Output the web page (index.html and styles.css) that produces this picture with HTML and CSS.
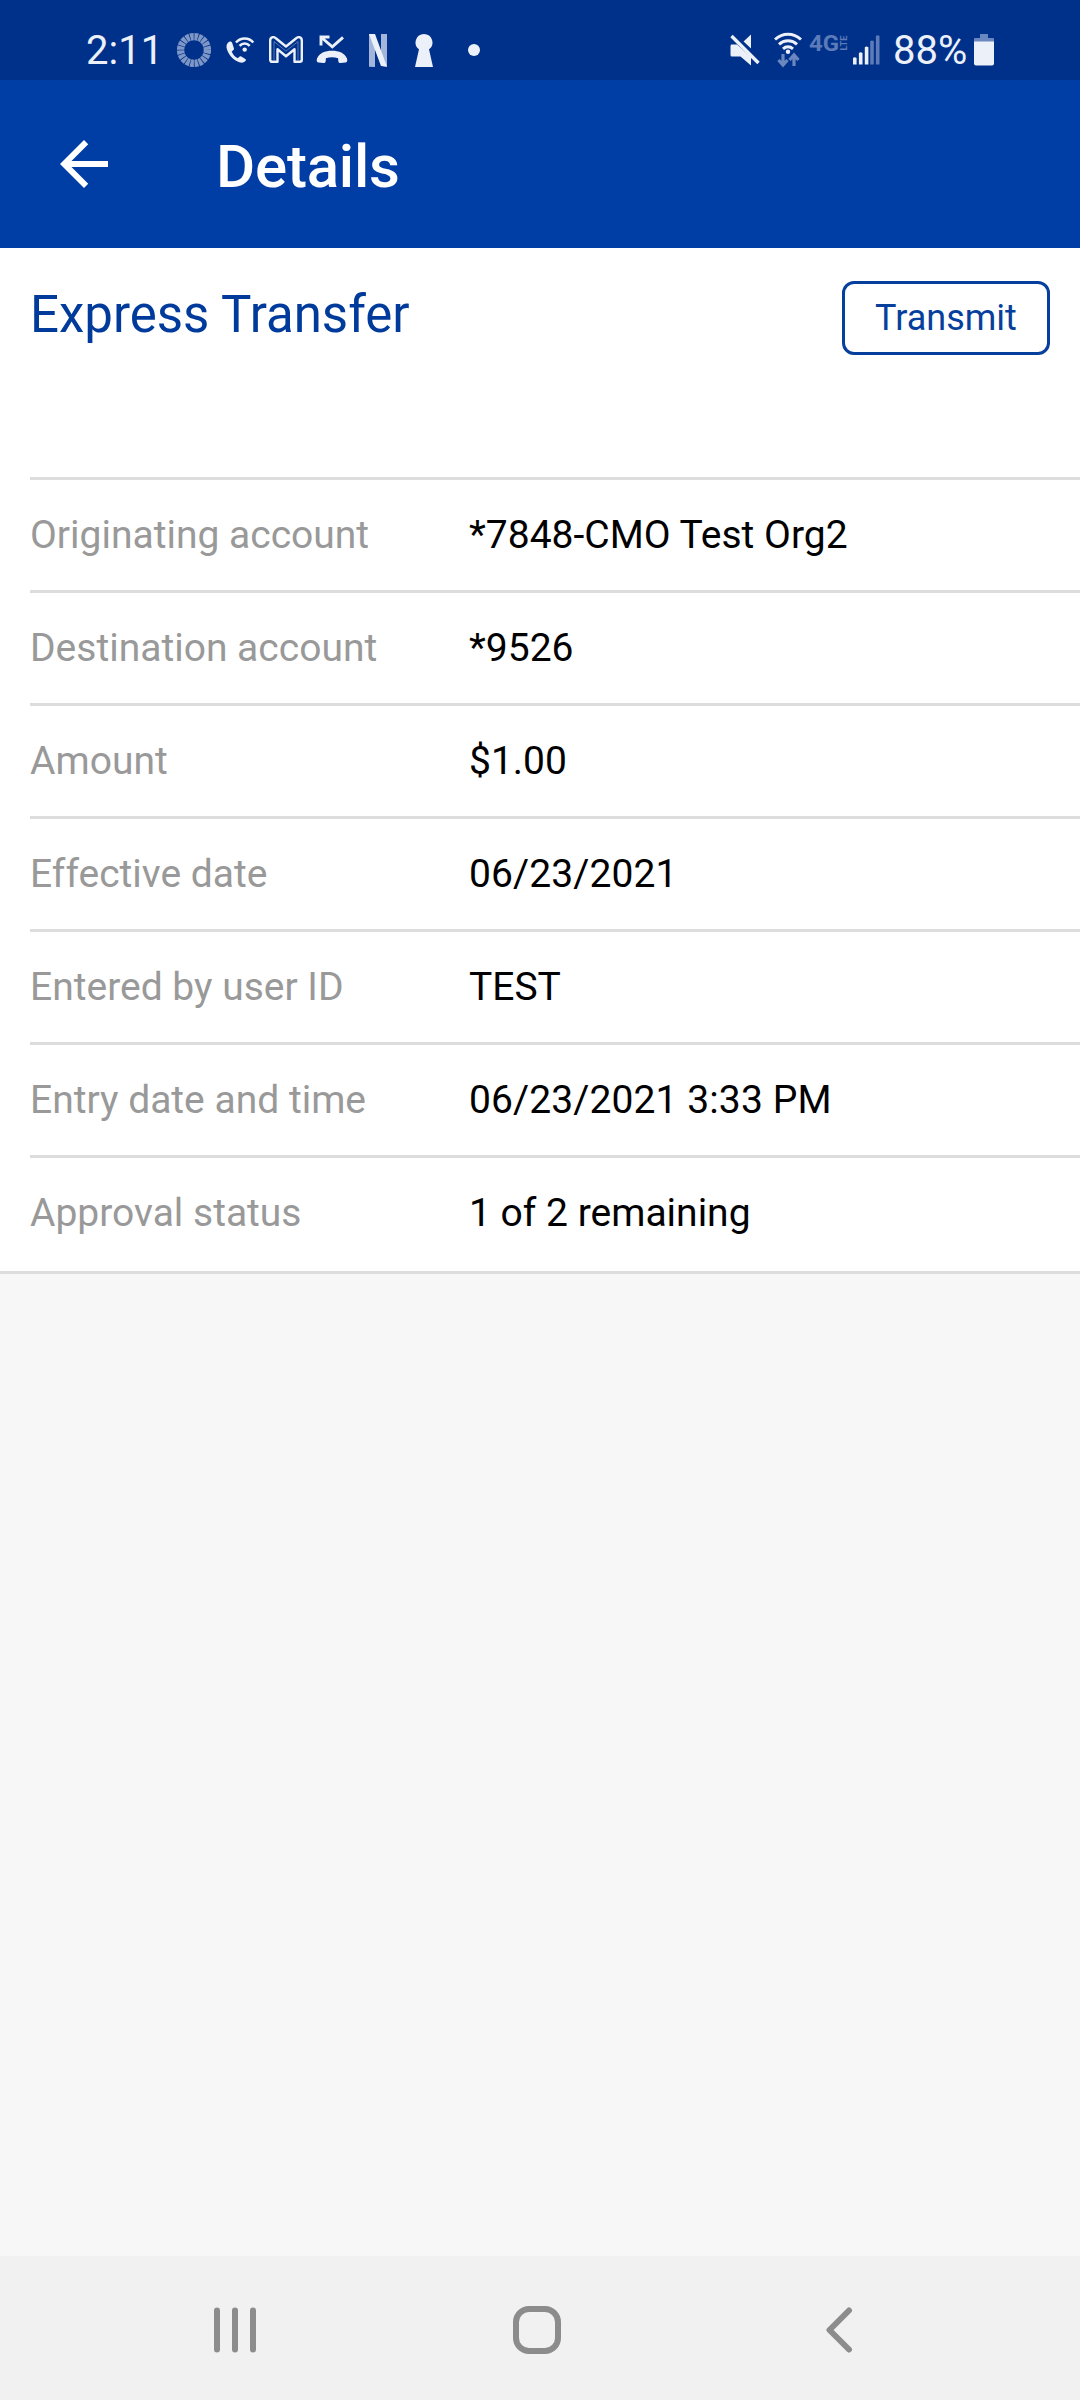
FILE: index.html
```html
<!DOCTYPE html>
<html>

	<head>
		<meta charset="UTF-8">
		<title>Details</title>
		<link rel="stylesheet" href="styles.css">
	</head>

	<body>
		<div class="status">
			<div class="status-left">
				<span class="time">2:11</span>
				<svg class="icon ring" width="36" height="36" viewBox="0 0 36 36">
					<circle cx="18" cy="18" r="13.4" fill="none" stroke="#7f97c6" stroke-width="7.4" stroke-dasharray="3.5 0.71" />
				</svg>
				<svg class="icon call" width="30" height="30" viewBox="0 0 30 30">
					<path d="M3.2 7.5C1.5 9 1 11.600 2 14.500c2.400 7 7.500 11.600 13.200 13 2.400.500 4.600-.300 5.600-1.900.300-.600.100-1.300-.500-1.700l-4-2.400c-.700-.400-1.500-.300-2 .300l-1.500 1.500c-3-1.500-5-4-6.100-6.800l1.700-1.400c.600-.500.700-1.200.500-1.900L7.300 8.300C6.700 6.400 4.900 6 3.200 7.500z" fill="#ecf0f9" />
					<path d="M11 7.500c4.700-5.300 12.800-5.300 17.300 0M14.600 10.800c2.700-3 7.400-3 10.100 0" fill="none" stroke="#ecf0f9" stroke-width="2.500" />
					<circle cx="19.700" cy="14.600" r="2.200" fill="#ecf0f9" />
				</svg>
				<svg class="icon mail" width="34" height="28" viewBox="0 0 34 28">
					<path d="M1.200 4.500C1.200 1 4.500.300 6.800 2.200L17 10.500l10.200-8.300c2.300-1.900 5.600-1.200 5.600 2.300v19.300q0 2-2 2h-5.300V13.300L17 20.200l-8.500-6.900v12.500H3.200q-2 0-2-2z" fill="none" stroke="#ecf0f9" stroke-width="2.400" stroke-linejoin="round" />
					<path d="M5 24V5.500l12 9.600 12-9.600V24" fill="none" stroke="#ecf0f9" stroke-width="1" opacity=".35" />
				</svg>
				<svg class="icon missed" width="32" height="30" viewBox="0 0 32 30">
					<path d="M5 10.500V2h8.500M5.500 2.500l10.800 9.300L27 2.300" fill="none" stroke="#ecf0f9" stroke-width="2.900" />
					<path d="M1 23.500C3.200 18 9 15.700 16 15.700s12.800 2.300 15 7.800c.700 2.200.100 3.800-1.600 4.100l-4.700.5c-1.400.1-2.300-.5-2.400-2l-.2-2.900c-4-1.200-8.200-1.200-12.200 0l-.2 2.900c-.1 1.500-1 2.100-2.400 2l-4.700-.5C.9 27.300.3 25.700 1 23.500z" fill="#ecf0f9" />
				</svg>
				<svg class="icon netflix" width="18" height="33" viewBox="0 0 18 33">
					<path d="M0 0h6v33l-6-.3zM12 0h6v32.700l-6-1z" fill="#a3b5da" />
					<path d="M0 0h6l12 32.700-6-.7z" fill="#ecf0f9" />
				</svg>
				<svg class="icon keyhole" width="18" height="33" viewBox="0 0 18 33">
					<path d="M9 0a8.500 8.500 0 0 1 5 15.300L18 33H0l4-17.700A8.500 8.500 0 0 1 9 0z" fill="#ecf0f9" />
				</svg>
				<span class="dot"></span>
			</div>
			<div class="status-right">
				<svg class="icon" width="30" height="32" viewBox="0 0 30 32">
					<path d="M1 10.500h6L21 23v8.500L10.500 22.500H2q-1.500 0-1.500-1.500v-9zM13.500 7.500L21 .5v14z" fill="#ecf0f9" />
					<path d="M3.500 0l27 27" stroke="#00318a" stroke-width="3" />
					<path d="M1.500 2l27 27" stroke="#ecf0f9" stroke-width="3.400" />
				</svg>
				<svg class="icon wifi" width="28" height="36" viewBox="0 0 28 36">
					<path d="M1 7.500c7.500-7 18.500-7 26 0M5 12.300c5-4.600 13-4.600 18 0M9 16.800c3-2.600 7-2.600 10 0" fill="none" stroke="#ecf0f9" stroke-width="3" />
					<circle cx="14" cy="19.800" r="2.200" fill="#ecf0f9" />
					<path d="M9 22v11M4.500 28L9 33l4.500-5M20 34V23M15.500 28l4.500-5 4.500 5" fill="none" stroke="#6b87bf" stroke-width="3.200" />
				</svg>
				<svg class="icon lte" width="40" height="18" viewBox="0 0 40 18">
					<text class="net" x="0" y="16.500" textLength="30" lengthAdjust="spacingAndGlyphs">4G</text>
					<text class="net-small" transform="translate(38 16.500) rotate(-90)" x="0" y="0" textLength="15" lengthAdjust="spacingAndGlyphs">LTE</text>
				</svg>
				<svg class="icon signal" width="28" height="30" viewBox="0 0 28 30">
					<path d="M0 23q1.800-1.500 3.600 0v6.500H0zM5.900 18q1.800-1.500 3.600 0v11.500H5.900zM11.800 12.200q1.800-1.500 3.600 0v17.300h-3.600z" fill="#ecf0f9" />
					<path d="M17.200 6.200q1.800-1.500 3.600 0v23.300h-3.600zM22.900 1q1.800-1.500 3.600 0v28.500h-3.600z" fill="#5c7bb8" />
				</svg>
				<span class="percent">88%</span>
				<svg class="icon battery" width="20" height="32" viewBox="0 0 20 32">
					<path d="M6 0h8v4h5q1 0 1 1v3H0V5q0-1 1-1h5z" fill="#6b87bf" />
					<path d="M0 7.500h20v22q0 2-2 2H2q-2 0-2-2z" fill="#ecf0f9" />
				</svg>
			</div>
		</div>

		<div class="header">
			<svg width="72" height="72" viewBox="0 0 24 24">
				<path d="M20 11H7.830l5.590-5.590L12 4l-8 8 8 8 1.410-1.410L7.830 13H20v-2z" fill="#fff" />
			</svg>
			<h1>Details</h1>
		</div>

		<div class="contain">
			<div class="top">
				<h2>Express Transfer</h2>
				<button class="btn" type="button">Transmit</button>
			</div>
			<dl class="list">
				<div class="row">
					<dt>Originating account</dt>
					<dd>*7848-CMO Test Org2</dd>
				</div>
				<div class="row">
					<dt>Destination account</dt>
					<dd>*9526</dd>
				</div>
				<div class="row">
					<dt>Amount</dt>
					<dd>$1.00</dd>
				</div>
				<div class="row">
					<dt>Effective date</dt>
					<dd class="date">06/23/2021</dd>
				</div>
				<div class="row">
					<dt>Entered by user ID</dt>
					<dd>TEST</dd>
				</div>
				<div class="row">
					<dt>Entry date and time</dt>
					<dd class="date">06/23/2021 3:33 PM</dd>
				</div>
				<div class="row">
					<dt>Approval status</dt>
					<dd>1 of 2 remaining</dd>
				</div>
			</dl>
		</div>

		<div class="nav">
			<svg width="42" height="46" viewBox="0 0 42 46">
				<path d="M3 3.500v39M21 3.500v39M39 3.500v39" fill="none" stroke="#8c8c8c" stroke-width="6" stroke-linecap="round" />
			</svg>
			<svg class="home" width="48" height="48" viewBox="0 0 48 48">
				<rect x="3" y="3" width="42" height="42" rx="13" fill="none" stroke="#8c8c8c" stroke-width="6" />
			</svg>
			<svg width="28" height="46" viewBox="0 0 28 46">
				<path d="M24 3.500L4.500 23 24 42.500" fill="none" stroke="#8c8c8c" stroke-width="6" stroke-linecap="round" stroke-linejoin="round" />
			</svg>
		</div>
	</body>

</html>
```
FILE: styles.css
```css
* {
	box-sizing: border-box;
}

body {
	display: flex;
	flex-direction: column;
	width: 1080px;
	height: 2400px;
	margin: 0;
	background-color: #f7f7f7;
	font-family: Roboto, "Liberation Sans", sans-serif;
}

svg {
	display: block;
	flex: none;
}

h1,
h2,
dl,
dd {
	margin: 0;
}

/* status bar */
.status {
	display: flex;
	justify-content: space-between;
	height: 80px;
	padding: 0 86px 0 86px;
	background-color: #00318a;
	color: #ecf0f9;
}

.status-left,
.status-right {
	display: flex;
	align-items: center;
	height: 100px;
}

.time,
.percent {
	font-size: 40px;
	line-height: 48px;
	white-space: nowrap;
	padding-top: 2px;
}

.time {
	width: 76px;
}

.ring {
	margin-left: 14px;
}

.call {
	margin-left: 13px;
}

.mail {
	margin-left: 14px;
}

.missed {
	margin-left: 13px;
}

.netflix {
	margin-left: 21px;
}

.keyhole {
	margin-left: 28px;
}

.dot {
	width: 12px;
	height: 12px;
	margin-left: 35px;
	border-radius: 50%;
	background-color: #ecf0f9;
}

.wifi {
	margin-left: 14px;
}

.lte {
	margin: 0 0 15px 7px;
	overflow: visible;
}

.net {
	font: 700 22px Roboto, sans-serif;
	fill: #5c7bb8;
}

.net-small {
	font: 700 9px Roboto, sans-serif;
	fill: #5c7bb8;
}

.signal {
	margin-left: 4px;
}

.percent {
	width: 75px;
	margin-left: 12px;
}

.battery {
	margin-left: 6px;
}

/* title bar */
.header {
	display: flex;
	align-items: center;
	height: 168px;
	padding: 0 48px;
	background-color: #003da5;
	color: #fff;
}

.header h1 {
	margin-left: 96px;
	padding-top: 4px;
	font-size: 60px;
	font-weight: 500;
	letter-spacing: -0.2px;
}

/* transfer details */
.contain {
	height: 1026px;
	border-bottom: 3px solid #ddd;
	background-color: #fff;
}

.top {
	display: flex;
	justify-content: space-between;
	height: 229px;
	padding: 33px 30px 0;
	color: #003b9c;
}

.top h2 {
	padding-top: 1px;
	font-size: 51px;
	font-weight: 400;
	line-height: 66px;
}

.btn {
	width: 208px;
	height: 74px;
	padding: 0;
	border: 3px solid #073f9c;
	border-radius: 12px;
	background-color: #fff;
	color: #073f9c;
	font-family: inherit;
	font-size: 36px;
}

.list {
	margin-left: 30px;
	font-size: 39px;
}

.row {
	display: flex;
	height: 113px;
	border-top: 3px solid #ddd;
	line-height: 110px;
}

.row dt {
	width: 439px;
	color: #999;
}

.row dd {
	color: #000;
}

.row .date {
	letter-spacing: 0.1px;
}

/* bottom buttons */
.nav {
	display: flex;
	align-items: center;
	height: 144px;
	margin-top: auto;
	padding: 4px 0 0 214px;
	background-color: #f1f1f1;
}

.home {
	margin: 0 264px 0 257px;
}
```
